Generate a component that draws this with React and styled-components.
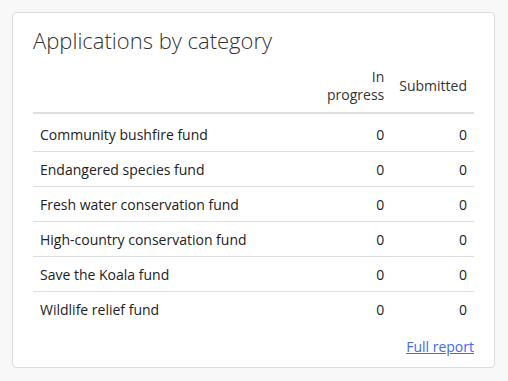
import React from "react";
import styled, { createGlobalStyle } from "styled-components";

const rows = [
  { name: "Community bushfire fund", inProgress: 0, submitted: 0 },
  { name: "Endangered species fund", inProgress: 0, submitted: 0 },
  { name: "Fresh water conservation fund", inProgress: 0, submitted: 0 },
  { name: "High-country conservation fund", inProgress: 0, submitted: 0 },
  { name: "Save the Koala fund", inProgress: 0, submitted: 0 },
  { name: "Wildlife relief fund", inProgress: 0, submitted: 0 },
];

const GlobalStyle = createGlobalStyle`
  body {
    margin: 0;
    background: #f8f8f8;
    font-family: "Open Sans", "Liberation Sans", sans-serif;
    color: #222;
  }
`;

const Page = styled.div`
  padding: 12px;
`;

const Card = styled.section`
  width: 483px;
  box-sizing: border-box;
  background: #fff;
  border: 1px solid #dcdcdc;
  border-radius: 4px;
  padding: 12px 20px 11px;
`;

const Title = styled.h2`
  margin: 0 0 5px;
  font-size: 22px;
  font-weight: 300;
  line-height: 30px;
  color: #333;
`;

const Table = styled.table`
  width: 100%;
  border-collapse: collapse;
  font-size: 14px;
  line-height: 18px;
`;

const HeadCell = styled.th`
  font-weight: 400;
  text-align: right;
  vertical-align: middle;
  padding: 8px 7px 8px 8px;
  color: #333;
  border-bottom: 2px solid #dedede;
  width: ${(p) => p.$width || "auto"};
`;

const Row = styled.tr`
  border-bottom: 1px solid #dedede;

  &:last-child {
    border-bottom: none;
  }

  &:first-child td {
    padding-top: 12px;
  }
`;

const Cell = styled.td`
  padding: 9px 7px 7px;
  text-align: ${(p) => (p.$num ? "right" : "left")};
  color: #222;
  white-space: nowrap;
`;

const Footer = styled.div`
  display: flex;
  justify-content: flex-end;
  margin-top: 12px;
  font-size: 14px;
  line-height: 18px;
`;

const ReportLink = styled.a`
  color: #4369f2;
  text-decoration: underline;
  cursor: pointer;
`;

export default function App() {
  return (
    <Page>
      <GlobalStyle />
      <Card>
        <Title>Applications by category</Title>
        <Table>
          <thead>
            <tr>
              <HeadCell $width="auto" />
              <HeadCell $width="56px">In progress</HeadCell>
              <HeadCell $width="67px">Submitted</HeadCell>
            </tr>
          </thead>
          <tbody>
            {rows.map((r) => (
              <Row key={r.name}>
                <Cell>{r.name}</Cell>
                <Cell $num>{r.inProgress}</Cell>
                <Cell $num>{r.submitted}</Cell>
              </Row>
            ))}
          </tbody>
        </Table>
        <Footer>
          <ReportLink href="#">Full report</ReportLink>
        </Footer>
      </Card>
    </Page>
  );
}
